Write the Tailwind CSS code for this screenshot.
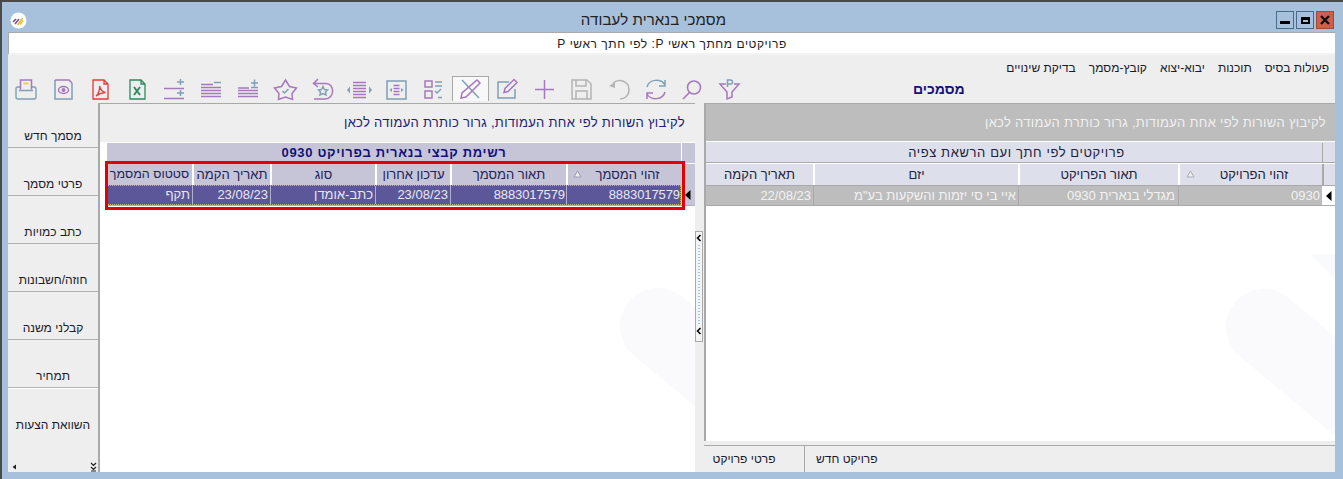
<!DOCTYPE html>
<html lang="he">
  <head>
    <meta charset="UTF-8" />
    <title>מסמכי בנארית לעבודה</title>
    <script src="https://cdn.jsdelivr.net/npm/@tailwindcss/browser@4"></script>
  </head>
  <body class="w-[1343px] h-[479px] overflow-hidden bg-[#a7c0dc] font-['Liberation_Sans',sans-serif] text-[12px]">
    <div class="h-[479px] flex flex-col border-t-2 border-l-2 border-[#4a4a4a]">
      <!-- title bar -->
      <div class="h-[30px] relative flex items-center justify-center shrink-0">
        <svg class="absolute left-[8px] top-[10px]" width="17" height="17" viewBox="0 0 17 17">
          <circle cx="8.500" cy="8.500" r="8" fill="#fff" />
          <path d="M3 10l3-3M5 12l4-5" stroke="#7a4ea0" stroke-width="1.600" />
          <path d="M7.500 13l5-7M10 12.500l3-4" stroke="#e8c430" stroke-width="1.600" />
        </svg>
        <span dir="rtl" class="text-[15px] tracking-[0.1px] text-[#222] ml-[-38px] mt-[7px]">מסמכי בנארית לעבודה</span>
        <div class="absolute left-[1274px] top-[9px] flex gap-[2px]">
          <div class="w-[18px] h-[18px] border border-[#4a6a8a] flex items-center justify-center pt-[4px]"><div class="w-[10px] h-[3px] bg-black"></div></div>
          <div class="w-[18px] h-[18px] border border-[#4a6a8a] flex items-center justify-center"><div class="w-[9px] h-[7px] border-2 border-t-[3px] border-black"></div></div>
          <div class="w-[18px] h-[18px] border border-[#a04a3a] bg-[#cd5f4c] flex items-center justify-center">
            <svg width="10" height="10" viewBox="0 0 10 10"><path d="M1 1l8 8M9 1l-8 8" stroke="#111" stroke-width="2.400" /></svg>
          </div>
        </div>
      </div>

      <div class="ml-[6px] w-[1327px] h-[440px] flex flex-col bg-[#eeeeee] shrink-0">
        <!-- subtitle -->
        <div dir="rtl" class="h-[23px] shrink-0 bg-white border-t border-l border-[#a9a9a9] border-b-2 border-b-[#f2f2f2] flex items-center justify-center text-[12px] text-[#222] tracking-[0.55px] pt-[2px]">
          <span class="ml-[0px]">פרויקטים מחתך ראשי P: לפי חתך ראשי P</span>
        </div>

        <!-- menu -->
        <div dir="rtl" class="h-[21px] shrink-0 flex items-center gap-[13px] pr-[6px] pt-[4px] text-[12px] text-[#1a1a2a]">
          <span>פעולות בסיס</span><span>תוכנות</span><span>יבוא-יצוא</span><span>קובץ-מסמך</span><span>בדיקת שינויים</span>
        </div>

        <!-- toolbar + heading -->
        <div class="h-[27px] shrink-0 flex items-start relative">
          <div class="flex h-[26px] pt-[1px]">
            <!-- printer -->
            <svg class="w-[37px] h-[25px]" viewBox="0 0 37 25" fill="none" stroke-width="1.400">
              <path d="M12 10H9.500Q8 10 8 12v8q0 2 2 2h16q2 0 2-2v-8q0-2-2-2h-2.500M11 13.500h14" stroke="#7fa0b6" />
              <path d="M12.500 12.500V3h11v9.500" stroke="#a678bd" stroke-width="1.600" />
              <path d="M15.500 6.500h5" stroke="#f0cf4a" stroke-width="2" />
            </svg>
            <!-- preview -->
            <svg class="w-[37px] h-[25px]" viewBox="0 0 37 25" fill="none" stroke-width="1.500">
              <path d="M10 3v19h17V6" stroke="#7fa0b6" /><path d="M10 3h14l3 3" stroke="#a678bd" /><ellipse cx="18.500" cy="13" rx="5" ry="3.500" stroke="#a678bd" /><circle cx="18.500" cy="13" r="2" fill="#a678bd" />
            </svg>
            <!-- pdf -->
            <svg class="w-[37px] h-[25px]" viewBox="0 0 37 25" fill="none" stroke="#e53a3a" stroke-width="1.300">
              <path d="M11 3h11l4 4v15H11zM22 3v4h4" /><path d="M14 19c3-2 4-8 3.500-10 1 4 3 6 6 6.500-3 0-6 1-9.500 3.500" />
            </svg>
            <!-- excel -->
            <svg class="w-[37px] h-[25px]" viewBox="0 0 37 25" fill="none" stroke="#2f8a5e" stroke-width="1.300">
              <path d="M11 3h11l4 4v15H11zM22 3v4h4" /><path d="M15 10l6 8M21 10l-6 8" stroke-width="2" />
            </svg>
            <!-- add rows -->
            <svg class="w-[37px] h-[25px]" viewBox="0 0 37 25" fill="none" stroke-width="1.500">
              <path d="M8 11.500h20M8 21.500h20" stroke="#a678bd" /><path d="M21 5h7M24.500 2v6M21 16h7M24.500 13v6" stroke="#7fa0b6" />
            </svg>
            <!-- remove rows -->
            <svg class="w-[37px] h-[25px]" viewBox="0 0 37 25" fill="none" stroke-width="1.500">
              <path d="M8 10.500h20M8 13.500h20M8 16.500h20M8 19.500h20M8 7.500h12" stroke="#a678bd" /><path d="M21 5.500h7" stroke="#7fa0b6" />
            </svg>
            <!-- add lines -->
            <svg class="w-[37px] h-[25px]" viewBox="0 0 37 25" fill="none" stroke-width="1.500">
              <path d="M8 13.500h20M8 16.500h20M8 19.500h20M8 11h11" stroke="#a678bd" /><path d="M21 6h7M24.500 2.500v7M21 10.500h7" stroke="#7fa0b6" />
            </svg>
            <!-- star check -->
            <svg class="w-[37px] h-[25px]" viewBox="0 0 37 25" fill="none" stroke-width="1.500">
              <path d="M18.500 3l4 6.500 7 1.500-4.500 5.500.5 6-7-2.500-7 2.500.5-6L7.500 11l7-1.500z" stroke="#a678bd" /><path d="M15.500 14l2 2 4-4" stroke="#7fa0b6" />
            </svg>
            <!-- star undo -->
            <svg class="w-[37px] h-[25px]" viewBox="0 0 37 25" fill="none" stroke-width="1.500">
              <path d="M14 2L9.500 6.500l4.500 3.500M10 6.500h12c9 0 9 15.500-1 15.500H10" stroke="#a678bd" /><path d="M19 9.500l1.500 3 3 .5-2 2 .5 3-3-1.500-3 1.500.5-3-2-2 3-.5z" stroke="#7fa0b6" />
            </svg>
            <!-- fit width -->
            <svg class="w-[37px] h-[25px]" viewBox="0 0 37 25" fill="none" stroke-width="1.500">
              <path d="M12 5.500h13M12 8.500h13M12 11.500h13M12 14.500h13M12 17.500h13M12 20.500h13" stroke="#a678bd" /><path d="M9 9.500L6 13l3 3.500zM28 9.500l3 3.500-3 3.500z" fill="#7fa0b6" />
            </svg>
            <!-- fit box -->
            <svg class="w-[37px] h-[25px]" viewBox="0 0 37 25" fill="none" stroke-width="1.500">
              <path d="M9 4h19v18H9z" stroke="#7fa0b6" /><path d="M15.500 8.500h6M15.500 11.500h6M15.500 14.500h6M15.500 17.500h6" stroke="#a678bd" /><path d="M14 11l-2.500 2 2.500 2zM23 11l2.500 2-2.500 2z" fill="#7fa0b6" />
            </svg>
            <!-- checklist -->
            <svg class="w-[37px] h-[25px]" viewBox="0 0 37 25" fill="none" stroke-width="1.500">
              <path d="M10 4h7v6h-7zM10 14h7v7h-7z" stroke="#a678bd" /><path d="M20 5h7M20 9h7M23 20.500h4M20 14l2 2 4-4" stroke="#7fa0b6" />
            </svg>
            <!-- selected: pencil off -->
            <div class="w-[37px] h-[25px] -mt-[1px] border border-[#a9a9a9] border-b-0 bg-[#f8f8f8]">
              <svg class="w-[35px] h-[24px]" viewBox="0 0 35 24" fill="none" stroke-width="1.500">
                <path d="M9 3l17 18" stroke="#7fa0b6" /><path d="M24 3l3 3L13 20l-5 1 1-5z" stroke="#a678bd" />
              </svg>
            </div>
            <!-- edit -->
            <svg class="w-[37px] h-[25px]" viewBox="0 0 37 25" fill="none" stroke-width="1.500">
              <path d="M26 12v9H9V5h11" stroke="#7fa0b6" /><path d="M25 2.500l3 3-9 9-4 1 1-4z" stroke="#a678bd" />
            </svg>
            <!-- plus -->
            <svg class="w-[37px] h-[25px]" viewBox="0 0 37 25" fill="none" stroke="#a678bd" stroke-width="1.500">
              <path d="M9 12.500h19M18.500 3v19" />
            </svg>
            <!-- save disabled -->
            <svg class="w-[37px] h-[25px]" viewBox="0 0 37 25" fill="none" stroke="#b4b4b4" stroke-width="1.500">
              <path d="M9 3h15l4 4v15H9zM13 3v6h10V3M13 22v-8h11v8" />
            </svg>
            <!-- undo disabled -->
            <svg class="w-[37px] h-[25px]" viewBox="0 0 37 25" fill="none" stroke="#b4b4b4" stroke-width="1.500">
              <path d="M13 6c6-5 16-2 16 6.500 0 6-4 9.500-9 9.500" /><path d="M9 9l6-4v6z" fill="#b4b4b4" stroke="none" />
            </svg>
            <!-- refresh -->
            <svg class="w-[37px] h-[25px]" viewBox="0 0 37 25" fill="none" stroke-width="1.500">
              <path d="M10 10c2-8 14-9 18-2M28 3v6h-6" stroke="#7fa0b6" /><path d="M28 15c-2 8-14 9-18 2M10 22v-6h6" stroke="#a678bd" />
            </svg>
            <!-- search -->
            <svg class="w-[37px] h-[25px]" viewBox="0 0 37 25" fill="none" stroke-width="1.600">
              <circle cx="20" cy="10.500" r="6.500" stroke="#a678bd" /><path d="M15.500 15.500L9 22" stroke="#a678bd" />
            </svg>
            <!-- filter P -->
            <svg class="w-[37px] h-[25px]" viewBox="0 0 37 25" fill="none" stroke-width="1.500">
              <path d="M15 7H9l7 8v7l5-2v-5l7-8h-5" stroke="#a678bd" /><path d="M16.500 10V3h3a2 2 0 0 1 0 4h-3" stroke="#7fa0b6" />
            </svg>
          </div>
          <span dir="rtl" class="ml-[165px] mt-[3px] text-[14px] font-bold text-[#12127a]">מסמכים</span>
        </div>

        <!-- main area -->
        <div class="flex-1 min-h-0 flex">
          <!-- side tabs -->
          <div dir="rtl" class="w-[90px] shrink-0 flex flex-col text-[12px] text-[#1a1a2a] text-center relative">
            <div class="h-[45px] shrink-0 flex items-end justify-center pb-[2px] border-b border-[#b4b4b4]">מסמך חדש</div>
            <div class="h-[48px] shrink-0 flex items-end justify-center pb-[2px] border-b border-[#b4b4b4]">פרטי מסמך</div>
            <div class="h-[48px] shrink-0 flex items-end justify-center pb-[2px] border-b border-[#b4b4b4]">כתב כמויות</div>
            <div class="h-[48px] shrink-0 flex items-end justify-center pb-[2px] border-b border-[#b4b4b4]">חוזה/חשבונות</div>
            <div class="h-[48px] shrink-0 flex items-end justify-center pb-[2px] border-b border-[#b4b4b4]">קבלני משנה</div>
            <div class="h-[48px] shrink-0 flex items-end justify-center pb-[2px] border-b border-[#b4b4b4]">תמחיר</div>
            <div class="flex-1 flex items-start justify-center pt-[27px] border-t border-white">השוואת הצעות</div>
            <svg class="absolute left-[1px] bottom-0" width="90" height="10" viewBox="0 0 90 10">
              <path d="M7 2.500v5L3.500 5z" fill="#222" />
              <path d="M82 1l2.500 2.500L87 1M82 5l2.500 2.500L87 5M82 9h5" fill="none" stroke="#222" stroke-width="1.200" />
            </svg>
          </div>

          <!-- left panel -->
          <div class="w-[597px] shrink-0 relative flex flex-col bg-white border-l-2 border-t border-[#a9a9a9]">
            <div dir="rtl" class="h-[39px] shrink-0 bg-[#eeeeee] border-b border-white flex items-center pr-[10px] text-[13px] tracking-[0.3px] text-[#1c1c7a]">לקיבוץ השורות לפי אחת העמודות, גרור כותרת העמודה לכאן</div>
            <div class="ml-[7px] flex-1 flex flex-col relative">
              <div class="h-[20px] flex">
                <div dir="rtl" class="w-[574px] bg-[#c6c5d8] flex items-center justify-center font-bold text-[13px] text-[#12127a] tracking-[0.65px]">רשימת קבצי בנארית בפרויקט 0930</div>
                <div class="w-[1px]"></div>
                <div class="flex-1 bg-[#c6c5d8]"></div>
              </div>
              <div dir="rtl" class="h-[22px] flex bg-[#c6c5d8] text-[13px] text-[#222258] border-t border-white">
                <div class="w-[14px]"></div>
                <div class="w-[115px] relative border-l-2 border-white flex items-center justify-center pl-[6px]">זהוי המסמך
                  <svg class="absolute left-[5px] top-[6px]" width="9" height="8" viewBox="0 0 9 8"><path d="M4.500 1L8 7H1z" fill="#eee" stroke="#9a9ab0" /></svg>
                </div>
                <div class="w-[116px] border-l-2 border-white flex items-center justify-center">תאור המסמך</div>
                <div class="w-[75px] border-l-2 border-white flex items-center justify-center">עדכון אחרון</div>
                <div class="w-[105px] border-l-2 border-white flex items-center justify-center">סוג</div>
                <div class="w-[78px] border-l-2 border-white flex items-center justify-center">תאריך הקמה</div>
                <div class="flex-1 flex items-center justify-center whitespace-nowrap text-[12.500px]">סטטוס המסמך</div>
              </div>
              <div dir="rtl" class="h-[21px] flex text-[13px] text-[#e8e8f2] border-b border-[#b0b0b8]">
                <div class="w-[14px] bg-[#c6c5d8] flex items-center justify-center">
                  <svg width="6" height="10" viewBox="0 0 6 10"><path d="M5.500 0v10L0 5z" fill="#000" /></svg>
                </div>
                <div class="flex-1 flex bg-[#5b5798] border border-dotted border-[#b8b87a]">
                  <div class="w-[114px] border-l border-[#b0b0c8] flex items-center tracking-[-0.1px]">8883017579</div>
                  <div class="w-[116px] border-l border-[#b0b0c8] flex items-center pr-[1px] tracking-[-0.1px]">8883017579</div>
                  <div class="w-[75px] border-l border-[#b0b0c8] flex items-center pr-[2px]">23/08/23</div>
                  <div class="w-[105px] border-l border-[#b0b0c8] flex items-center pr-[2px]">כתב-אומדן</div>
                  <div class="w-[78px] border-l border-[#b0b0c8] flex items-center pr-[2px]">23/08/23</div>
                  <div class="flex-1 flex items-center pr-[2px]">תקף</div>
                </div>
              </div>
            </div>
            <!-- watermark -->
            <svg class="absolute left-[520px] top-[182px]" width="75" height="126" viewBox="0 0 75 126">
              <path d="M38 40L140 125" stroke="#faf9fb" stroke-width="76" stroke-linecap="round" />
            </svg>
            <!-- red highlight -->
            <div class="absolute left-[5px] top-[57px] w-[580px] h-[49px] border-[3px] border-[#e50000]"></div>
          </div>

          <!-- splitter -->
          <div class="w-[9px] shrink-0 relative">
            <div class="absolute left-[0px] top-[128px] w-[8px] h-[111px] bg-[#f4f4f4] border border-[#a9a9a9]">
              <svg width="6" height="109" viewBox="0 0 6 109">
                <path d="M4.500 3L1.500 6l3 3M4.500 96L1.500 99l3 3" fill="none" stroke="#000" stroke-width="1.500" />
                <path d="M3 13V92" stroke="#3a9aee" stroke-dasharray="1 2" />
              </svg>
            </div>
          </div>

          <!-- right panel -->
          <div class="flex-1 min-w-0 flex flex-col">
            <div class="flex-1 relative flex flex-col bg-white border-l-2 border-t border-[#a9a9a9]">
              <div dir="rtl" class="h-[38px] shrink-0 bg-[#bdbdbd] border-b border-white flex items-center pr-[9px] text-[13px] tracking-[0.3px] text-[#f0f0f0]">לקיבוץ השורות לפי אחת העמודות, גרור כותרת העמודה לכאן</div>
              <div dir="rtl" class="h-[21px] flex bg-[#dde0ea] text-[13px] tracking-[0.6px] text-[#222240] border-b border-[#a9a9a9] pt-[1px]">
                <div class="w-[13px] border-l border-[#a9a9a9]"></div>
                <div class="flex-1 flex items-center justify-center pl-[5px]">פרויקטים לפי חתך ועם הרשאת צפיה</div>
              </div>
              <div dir="rtl" class="h-[22px] flex bg-[#dde0ea] text-[13px] text-[#222240] border-t border-white">
                <div class="w-[13px] border-l-2 border-[#a9a9a9]"></div>
                <div class="w-[144px] relative border-l-2 border-white flex items-center justify-center pl-[6px]">זהוי הפרויקט
                  <svg class="absolute left-[6px] top-[6px]" width="9" height="8" viewBox="0 0 9 8"><path d="M4.500 1L8 7H1z" fill="#eee" stroke="#a9a9b4" /></svg>
                </div>
                <div class="w-[160px] border-l-2 border-white flex items-center justify-center">תאור הפרויקט</div>
                <div class="w-[205px] border-l-2 border-white flex items-center justify-center">יזם</div>
                <div class="flex-1 flex items-center justify-center">תאריך הקמה</div>
              </div>
              <div dir="rtl" class="h-[21px] flex text-[13px] text-[#f2f2f2] border-t border-b border-[#a9a9a9]">
                <div class="w-[13px] bg-white flex items-center justify-center">
                  <svg width="6" height="10" viewBox="0 0 6 10"><path d="M5.500 0v10L0 5z" fill="#000" /></svg>
                </div>
                <div class="w-[144px] bg-[#bdbdbd] border-l border-[#a9a9a9] flex items-center pr-[2px]">0930</div>
                <div class="w-[160px] bg-[#bdbdbd] border-l border-[#a9a9a9] flex items-center pr-[3px]">מגדלי בנארית 0930</div>
                <div class="w-[205px] bg-[#bdbdbd] border-l border-[#a9a9a9] flex items-center pr-[2px]">איי בי סי יזמות והשקעות בע"מ</div>
                <div class="flex-1 bg-[#bdbdbd] flex items-center pr-[2px]">22/08/23</div>
              </div>
              <!-- watermark -->
              <svg class="absolute right-0 top-[150px]" width="111" height="186" viewBox="0 0 111 186">
                <path d="M86 0h25v25z" fill="#f9fafc" />
                <path d="M40 73L190 198" stroke="#faf9fb" stroke-width="76" stroke-linecap="round" />
              </svg>
            </div>
            <!-- bottom tabs -->
            <div class="h-[31px] shrink-0 bg-[#eeeeee] pt-[4px]">
              <div class="h-[27px] flex border-t border-[#a9a9a9] text-[12px] text-[#1a1a2a]">
                <div dir="rtl" class="w-[101px] border-r border-[#a9a9a9] flex items-center justify-center pr-[20px]">פרטי פרויקט</div>
                <div dir="rtl" class="pl-[11px] flex items-center">פרויקט חדש</div>
              </div>
            </div>
          </div>
        </div>
      </div>
    </div>
  </body>
</html>
